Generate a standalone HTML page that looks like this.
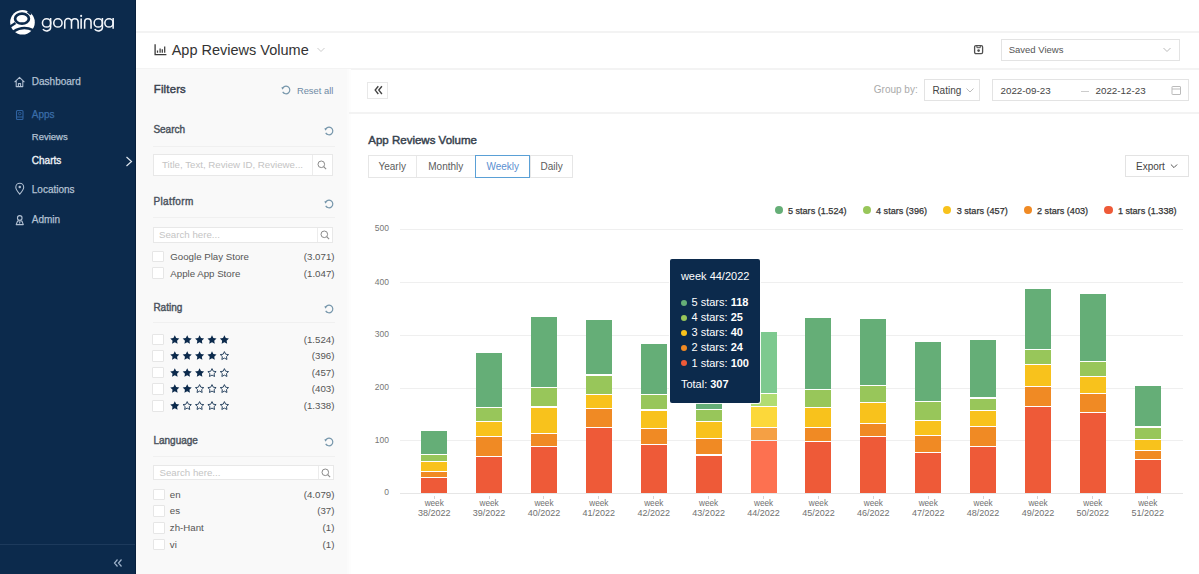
<!DOCTYPE html>
<html><head><meta charset="utf-8"><style>
html,body{margin:0;padding:0;}
body{width:1199px;height:574px;overflow:hidden;position:relative;font-family:"Liberation Sans", sans-serif;background:#fff;}
b{font-weight:bold;}
svg{overflow:visible;}
</style></head><body>
<div style="position:absolute;left:0.00px;top:0.00px;width:136.00px;height:574.00px;background:#0c2a4c;"></div>
<svg style="position:absolute;left:8px;top:8px;" width="30" height="30" viewBox="0 0 30 30">
<circle cx="14.5" cy="14.3" r="12.3" fill="#fff"/>
<ellipse cx="14" cy="10.7" rx="6.9" ry="5.0" fill="none" stroke="#0c2a4c" stroke-width="2.7"/>
<path d="M5.5 23.5 Q15.2 17.2 25 22.2" fill="none" stroke="#0c2a4c" stroke-width="2.6"/>
<path d="M19.5 3.5 L23 6.5" stroke="#0c2a4c" stroke-width="2"/>
<path d="M1.5 19 L7.5 15" stroke="#0c2a4c" stroke-width="2.2"/>
</svg>
<svg style="position:absolute;left:0px;top:0px;" width="130" height="45" viewBox="0 0 130 45"><g fill="none" stroke="#f2f5fa" stroke-width="1.55">
<circle cx="46.6" cy="22.9" r="4.15"/>
<path d="M50.6 18.1 V27.6 C50.6 31.6 44.6 31.8 42.9 29.2"/>
<circle cx="57.9" cy="22.9" r="4.15"/>
<path d="M64.75 28.7 V21.9 A3.37 3.37 0 0 1 71.5 21.9 V28.7 M71.5 21.9 A3.33 3.33 0 0 1 78.15 21.9 V28.7"/>
<path d="M81.15 18.4 V28.7"/>
<path d="M84.65 28.7 V21.9 A3.2 3.2 0 0 1 91.05 21.9 V28.7"/>
<circle cx="98.3" cy="22.9" r="4.15"/>
<path d="M102.4 18.1 V27.6 C102.4 31.6 96.4 31.8 94.7 29.2"/>
<circle cx="109" cy="22.9" r="4.15"/>
<path d="M113.15 18.1 V28.7"/>
</g><circle cx="81.15" cy="15.9" r="1.05" fill="#f2f5fa"/></svg>
<svg style="position:absolute;left:13px;top:75px;" width="14" height="14" viewBox="0 0 14 14"><path d="M1.6 7.2 L6.5 2.4 L11.4 7.2 M3.2 5.8 V11.6 H9.8 V5.8 M5.4 11.6 V8.6 H7.6 V11.6" fill="none" stroke="#b3c1d3" stroke-width="1.05" stroke-linejoin="round"/></svg>
<div style="position:absolute;top:76.53px;font-size:10px;line-height:10px;color:#b3c1d3;font-weight:normal;white-space:nowrap;left:31.80px;-webkit-text-stroke:0.25px #b3c1d3;">Dashboard</div>
<svg style="position:absolute;left:14px;top:109px;" width="12" height="12" viewBox="0 0 12 12"><rect x="2.5" y="1.5" width="6.5" height="9" rx="1" fill="none" stroke="#2f62a0" stroke-width="1.1"/><path d="M2.5 8 H9" stroke="#2f62a0" stroke-width="1"/><circle cx="5.75" cy="4.5" r="1.3" fill="none" stroke="#2f62a0" stroke-width="0.9"/></svg>
<div style="position:absolute;top:109.83px;font-size:10px;line-height:10px;color:#3a6da8;font-weight:normal;white-space:nowrap;left:31.80px;-webkit-text-stroke:0.25px #3a6da8;">Apps</div>
<div style="position:absolute;top:131.96px;font-size:9.5px;line-height:9.5px;color:#b3c1d3;font-weight:normal;white-space:nowrap;left:31.80px;-webkit-text-stroke:0.25px #b3c1d3;">Reviews</div>
<div style="position:absolute;top:156.03px;font-size:10px;line-height:10px;color:#eef2f7;font-weight:normal;white-space:nowrap;left:31.80px;-webkit-text-stroke:0.35px #eef2f7;">Charts</div>
<svg style="position:absolute;left:124px;top:155px;" width="10" height="13" viewBox="0 0 10 13"><path d="M2.5 2 L7.5 6.5 L2.5 11" fill="none" stroke="#dfe6ee" stroke-width="1.2"/></svg>
<svg style="position:absolute;left:14px;top:182px;" width="12" height="13" viewBox="0 0 12 13"><path d="M5.75 12.1 C3.1 9 1.8 7.1 1.8 5.2 A3.95 3.95 0 0 1 9.7 5.2 C9.7 7.1 8.4 9 5.75 12.1 Z" fill="none" stroke="#b3c1d3" stroke-width="1.05"/><circle cx="5.75" cy="5.1" r="1.25" fill="#b3c1d3"/></svg>
<div style="position:absolute;top:184.53px;font-size:10px;line-height:10px;color:#b3c1d3;font-weight:normal;white-space:nowrap;left:31.80px;-webkit-text-stroke:0.25px #b3c1d3;">Locations</div>
<svg style="position:absolute;left:14px;top:213px;" width="12" height="13" viewBox="0 0 12 13"><circle cx="5.75" cy="4.9" r="2.3" fill="none" stroke="#b3c1d3" stroke-width="1.1"/><path d="M2.2 11.6 L3.6 8 H7.9 L9.3 11.6 Z" fill="none" stroke="#b3c1d3" stroke-width="1.1" stroke-linejoin="round"/><path d="M5.75 8.2 L5 9.8 L5.75 11 L6.5 9.8 Z" fill="#b3c1d3"/></svg>
<div style="position:absolute;top:215.03px;font-size:10px;line-height:10px;color:#b3c1d3;font-weight:normal;white-space:nowrap;left:31.80px;-webkit-text-stroke:0.25px #b3c1d3;">Admin</div>
<div style="position:absolute;left:0.00px;top:544.00px;width:136.00px;height:1.00px;background:#1d3a5c;"></div>
<div style="position:absolute;left:134.50px;top:0.00px;width:1.50px;height:574.00px;background:#08203d;"></div>
<svg style="position:absolute;left:112px;top:557px;" width="12" height="12" viewBox="0 0 12 12"><path d="M5.5 2.5 L2.5 6 L5.5 9.5 M9.5 2.5 L6.5 6 L9.5 9.5" fill="none" stroke="#9fb3cb" stroke-width="1.2"/></svg>
<div style="position:absolute;left:136.00px;top:0.00px;width:1063.00px;height:574.00px;background:#fff;"></div>
<div style="position:absolute;left:136.00px;top:30.50px;width:1063.00px;height:2.00px;background:#f3f3f3;"></div>
<svg style="position:absolute;left:152px;top:42px;" width="16" height="16" viewBox="0 0 16 16"><path d="M3.1 2.3 V12.7 H14.4" fill="none" stroke="#3a3a3a" stroke-width="1.3"/><path d="M5.5 8.6 V10.7 M8.1 6.4 V10.7 M10.3 7.3 V10.7 M12.7 4.4 V10.7" stroke="#3a3a3a" stroke-width="1.25"/></svg>
<div style="position:absolute;top:42.73px;font-size:14.5px;line-height:14.5px;color:#333;font-weight:normal;white-space:nowrap;left:171.70px;">App Reviews Volume</div>
<svg style="position:absolute;left:316px;top:46px;" width="10" height="8" viewBox="0 0 10 8"><path d="M1.5 2 L5 5.5 L8.5 2" fill="none" stroke="#ccc" stroke-width="1"/></svg>
<svg style="position:absolute;left:972px;top:44px;" width="12" height="12" viewBox="0 0 12 12"><rect x="2.6" y="1.6" width="8" height="8" rx="1.3" fill="none" stroke="#505050" stroke-width="1.3"/><path d="M4.9 1.6 V3.7 H8.3 V1.6" fill="none" stroke="#505050" stroke-width="1"/><circle cx="6.6" cy="6.6" r="1.3" fill="#505050"/></svg>
<div style="position:absolute;left:1000.50px;top:39.00px;width:179.00px;height:22.00px;background:#fff;border:1px solid #e3e3e3;box-sizing:border-box;"></div>
<div style="position:absolute;top:45.26px;font-size:9.5px;line-height:9.5px;color:#555;font-weight:normal;white-space:nowrap;left:1008.70px;">Saved Views</div>
<svg style="position:absolute;left:1161px;top:45px;" width="12" height="10" viewBox="0 0 12 10"><path d="M2.5 3 L6 6.5 L9.5 3" fill="none" stroke="#bbb" stroke-width="1"/></svg>
<div style="position:absolute;left:136.00px;top:67.50px;width:1063.00px;height:2.00px;background:#f3f3f3;"></div>
<div style="position:absolute;left:136.00px;top:69.00px;width:211.00px;height:505.00px;background:#f9f9f9;"></div>
<div style="position:absolute;left:347.00px;top:69.00px;width:2.00px;height:505.00px;background:#fbfbfb;"></div>
<div style="position:absolute;left:349.00px;top:69.00px;width:2.00px;height:505.00px;background:#fdfdfd;"></div>
<div style="position:absolute;top:83.83px;font-size:11.3px;line-height:11.3px;color:#3a4350;font-weight:normal;white-space:nowrap;letter-spacing:0.2px;left:153.80px;-webkit-text-stroke:0.45px #3a4350;">Filters</div>
<svg style="position:absolute;left:279.6px;top:83.6px;" width="12" height="12" viewBox="0 0 12 12"><path d="M2.43 4.70 A3.8 3.8 0 1 1 2.71 7.90" fill="none" stroke="#7696ab" stroke-width="1.2"/><path d="M1.23 3.40 L3.83 3.10 L2.63 5.70 Z" fill="#7696ab"/></svg>
<div style="position:absolute;top:85.84px;font-size:9.4px;line-height:9.4px;color:#6f8aa5;font-weight:normal;white-space:nowrap;left:296.90px;">Reset all</div>
<div style="position:absolute;top:125.34px;font-size:10px;line-height:10px;color:#4a525c;font-weight:normal;white-space:nowrap;left:153.40px;-webkit-text-stroke:0.4px #4a525c;">Search</div>
<svg style="position:absolute;left:323px;top:125.2px;" width="12" height="12" viewBox="0 0 12 12"><path d="M2.43 4.70 A3.8 3.8 0 1 1 2.71 7.90" fill="none" stroke="#7696ab" stroke-width="1.2"/><path d="M1.23 3.40 L3.83 3.10 L2.63 5.70 Z" fill="#7696ab"/></svg>
<div style="position:absolute;left:152.50px;top:145.50px;width:182.00px;height:1.00px;background:#f0f0f0;"></div>
<div style="position:absolute;left:153.40px;top:154.30px;width:179.60px;height:21.70px;background:#fff;border:1px solid #e8e8e8;box-sizing:border-box;"></div>
<div style="position:absolute;left:311.50px;top:155.30px;width:1.00px;height:19.70px;background:#ececec;"></div>
<div style="position:absolute;top:160.44px;font-size:9.7px;line-height:9.7px;color:#c4c4c4;font-weight:normal;white-space:nowrap;left:162.00px;">Title, Text, Review ID, Reviewe...</div>
<svg style="position:absolute;left:316.25px;top:159.15px;" width="12" height="12" viewBox="0 0 12 12"><circle cx="5.3" cy="5.3" r="3.3" fill="none" stroke="#8a8a8a" stroke-width="1"/><path d="M7.7 7.7 L10.1 10.1" stroke="#8a8a8a" stroke-width="1.1"/></svg>
<div style="position:absolute;top:197.44px;font-size:10px;line-height:10px;color:#4a525c;font-weight:normal;white-space:nowrap;letter-spacing:0.38px;left:153.40px;-webkit-text-stroke:0.4px #4a525c;">Platform</div>
<svg style="position:absolute;left:323px;top:197.9px;" width="12" height="12" viewBox="0 0 12 12"><path d="M2.43 4.70 A3.8 3.8 0 1 1 2.71 7.90" fill="none" stroke="#7696ab" stroke-width="1.2"/><path d="M1.23 3.40 L3.83 3.10 L2.63 5.70 Z" fill="#7696ab"/></svg>
<div style="position:absolute;left:152.50px;top:217.00px;width:182.00px;height:1.00px;background:#f0f0f0;"></div>
<div style="position:absolute;left:152.60px;top:227.00px;width:180.40px;height:16.00px;background:#fff;border:1px solid #e8e8e8;box-sizing:border-box;"></div>
<div style="position:absolute;left:317.00px;top:228.00px;width:1.00px;height:14.00px;background:#ececec;"></div>
<div style="position:absolute;top:230.29px;font-size:9.7px;line-height:9.7px;color:#c4c4c4;font-weight:normal;white-space:nowrap;left:159.00px;">Search here...</div>
<svg style="position:absolute;left:319.0px;top:229.0px;" width="12" height="12" viewBox="0 0 12 12"><circle cx="5.3" cy="5.3" r="3.3" fill="none" stroke="#8a8a8a" stroke-width="1"/><path d="M7.7 7.7 L10.1 10.1" stroke="#8a8a8a" stroke-width="1.1"/></svg>
<div style="position:absolute;left:152.40px;top:250.70px;width:12.00px;height:11.80px;background:#fff;border:1px solid #e6e6e6;box-sizing:border-box;border-radius:1px;"></div>
<div style="position:absolute;top:252.09px;font-size:9.7px;line-height:9.7px;color:#555;font-weight:normal;white-space:nowrap;left:170.30px;">Google Play Store</div>
<div style="position:absolute;top:252.09px;font-size:9.7px;line-height:9.7px;color:#555;font-weight:normal;white-space:nowrap;right:864.50px;">(3.071)</div>
<div style="position:absolute;left:152.40px;top:267.10px;width:12.00px;height:11.80px;background:#fff;border:1px solid #e6e6e6;box-sizing:border-box;border-radius:1px;"></div>
<div style="position:absolute;top:268.59px;font-size:9.7px;line-height:9.7px;color:#555;font-weight:normal;white-space:nowrap;left:170.30px;">Apple App Store</div>
<div style="position:absolute;top:268.59px;font-size:9.7px;line-height:9.7px;color:#555;font-weight:normal;white-space:nowrap;right:864.50px;">(1.047)</div>
<div style="position:absolute;top:303.04px;font-size:10px;line-height:10px;color:#4a525c;font-weight:normal;white-space:nowrap;left:153.40px;-webkit-text-stroke:0.4px #4a525c;">Rating</div>
<svg style="position:absolute;left:323px;top:303px;" width="12" height="12" viewBox="0 0 12 12"><path d="M2.43 4.70 A3.8 3.8 0 1 1 2.71 7.90" fill="none" stroke="#7696ab" stroke-width="1.2"/><path d="M1.23 3.40 L3.83 3.10 L2.63 5.70 Z" fill="#7696ab"/></svg>
<div style="position:absolute;left:152.50px;top:322.00px;width:182.00px;height:1.00px;background:#f0f0f0;"></div>
<div style="position:absolute;left:152.40px;top:333.70px;width:12.00px;height:11.80px;background:#fff;border:1px solid #e6e6e6;box-sizing:border-box;border-radius:1px;"></div>
<svg style="position:absolute;left:169.0px;top:333.6px;" width="64" height="12" viewBox="0 0 64 12"><path d="M5.80,1.15 L7.18,4.00 L10.32,4.43 L8.03,6.63 L8.59,9.74 L5.80,8.25 L3.01,9.74 L3.57,6.63 L1.28,4.43 L4.42,4.00 Z" fill="#0c2a4c"/><path d="M18.20,1.15 L19.58,4.00 L22.72,4.43 L20.43,6.63 L20.99,9.74 L18.20,8.25 L15.41,9.74 L15.97,6.63 L13.68,4.43 L16.82,4.00 Z" fill="#0c2a4c"/><path d="M30.60,1.15 L31.98,4.00 L35.12,4.43 L32.83,6.63 L33.39,9.74 L30.60,8.25 L27.81,9.74 L28.37,6.63 L26.08,4.43 L29.22,4.00 Z" fill="#0c2a4c"/><path d="M43.00,1.15 L44.38,4.00 L47.52,4.43 L45.23,6.63 L45.79,9.74 L43.00,8.25 L40.21,9.74 L40.77,6.63 L38.48,4.43 L41.62,4.00 Z" fill="#0c2a4c"/><path d="M55.40,1.15 L56.78,4.00 L59.92,4.43 L57.63,6.63 L58.19,9.74 L55.40,8.25 L52.61,9.74 L53.17,6.63 L50.88,4.43 L54.02,4.00 Z" fill="#0c2a4c"/></svg>
<div style="position:absolute;top:334.89px;font-size:9.7px;line-height:9.7px;color:#555;font-weight:normal;white-space:nowrap;right:864.60px;">(1.524)</div>
<div style="position:absolute;left:152.40px;top:350.30px;width:12.00px;height:11.80px;background:#fff;border:1px solid #e6e6e6;box-sizing:border-box;border-radius:1px;"></div>
<svg style="position:absolute;left:169.0px;top:350.2px;" width="64" height="12" viewBox="0 0 64 12"><path d="M5.80,1.15 L7.18,4.00 L10.32,4.43 L8.03,6.63 L8.59,9.74 L5.80,8.25 L3.01,9.74 L3.57,6.63 L1.28,4.43 L4.42,4.00 Z" fill="#0c2a4c"/><path d="M18.20,1.15 L19.58,4.00 L22.72,4.43 L20.43,6.63 L20.99,9.74 L18.20,8.25 L15.41,9.74 L15.97,6.63 L13.68,4.43 L16.82,4.00 Z" fill="#0c2a4c"/><path d="M30.60,1.15 L31.98,4.00 L35.12,4.43 L32.83,6.63 L33.39,9.74 L30.60,8.25 L27.81,9.74 L28.37,6.63 L26.08,4.43 L29.22,4.00 Z" fill="#0c2a4c"/><path d="M43.00,1.15 L44.38,4.00 L47.52,4.43 L45.23,6.63 L45.79,9.74 L43.00,8.25 L40.21,9.74 L40.77,6.63 L38.48,4.43 L41.62,4.00 Z" fill="#0c2a4c"/><path d="M55.40,1.60 L56.66,4.21 L59.54,4.61 L57.44,6.61 L57.96,9.47 L55.40,8.10 L52.84,9.47 L53.36,6.61 L51.26,4.61 L54.14,4.21 Z" fill="none" stroke="#0c2a4c" stroke-width="0.85"/></svg>
<div style="position:absolute;top:351.49px;font-size:9.7px;line-height:9.7px;color:#555;font-weight:normal;white-space:nowrap;right:864.60px;">(396)</div>
<div style="position:absolute;left:152.40px;top:366.70px;width:12.00px;height:11.80px;background:#fff;border:1px solid #e6e6e6;box-sizing:border-box;border-radius:1px;"></div>
<svg style="position:absolute;left:169.0px;top:366.6px;" width="64" height="12" viewBox="0 0 64 12"><path d="M5.80,1.15 L7.18,4.00 L10.32,4.43 L8.03,6.63 L8.59,9.74 L5.80,8.25 L3.01,9.74 L3.57,6.63 L1.28,4.43 L4.42,4.00 Z" fill="#0c2a4c"/><path d="M18.20,1.15 L19.58,4.00 L22.72,4.43 L20.43,6.63 L20.99,9.74 L18.20,8.25 L15.41,9.74 L15.97,6.63 L13.68,4.43 L16.82,4.00 Z" fill="#0c2a4c"/><path d="M30.60,1.15 L31.98,4.00 L35.12,4.43 L32.83,6.63 L33.39,9.74 L30.60,8.25 L27.81,9.74 L28.37,6.63 L26.08,4.43 L29.22,4.00 Z" fill="#0c2a4c"/><path d="M43.00,1.60 L44.26,4.21 L47.14,4.61 L45.04,6.61 L45.56,9.47 L43.00,8.10 L40.44,9.47 L40.96,6.61 L38.86,4.61 L41.74,4.21 Z" fill="none" stroke="#0c2a4c" stroke-width="0.85"/><path d="M55.40,1.60 L56.66,4.21 L59.54,4.61 L57.44,6.61 L57.96,9.47 L55.40,8.10 L52.84,9.47 L53.36,6.61 L51.26,4.61 L54.14,4.21 Z" fill="none" stroke="#0c2a4c" stroke-width="0.85"/></svg>
<div style="position:absolute;top:367.89px;font-size:9.7px;line-height:9.7px;color:#555;font-weight:normal;white-space:nowrap;right:864.60px;">(457)</div>
<div style="position:absolute;left:152.40px;top:383.30px;width:12.00px;height:11.80px;background:#fff;border:1px solid #e6e6e6;box-sizing:border-box;border-radius:1px;"></div>
<svg style="position:absolute;left:169.0px;top:383.2px;" width="64" height="12" viewBox="0 0 64 12"><path d="M5.80,1.15 L7.18,4.00 L10.32,4.43 L8.03,6.63 L8.59,9.74 L5.80,8.25 L3.01,9.74 L3.57,6.63 L1.28,4.43 L4.42,4.00 Z" fill="#0c2a4c"/><path d="M18.20,1.15 L19.58,4.00 L22.72,4.43 L20.43,6.63 L20.99,9.74 L18.20,8.25 L15.41,9.74 L15.97,6.63 L13.68,4.43 L16.82,4.00 Z" fill="#0c2a4c"/><path d="M30.60,1.60 L31.86,4.21 L34.74,4.61 L32.64,6.61 L33.16,9.47 L30.60,8.10 L28.04,9.47 L28.56,6.61 L26.46,4.61 L29.34,4.21 Z" fill="none" stroke="#0c2a4c" stroke-width="0.85"/><path d="M43.00,1.60 L44.26,4.21 L47.14,4.61 L45.04,6.61 L45.56,9.47 L43.00,8.10 L40.44,9.47 L40.96,6.61 L38.86,4.61 L41.74,4.21 Z" fill="none" stroke="#0c2a4c" stroke-width="0.85"/><path d="M55.40,1.60 L56.66,4.21 L59.54,4.61 L57.44,6.61 L57.96,9.47 L55.40,8.10 L52.84,9.47 L53.36,6.61 L51.26,4.61 L54.14,4.21 Z" fill="none" stroke="#0c2a4c" stroke-width="0.85"/></svg>
<div style="position:absolute;top:384.49px;font-size:9.7px;line-height:9.7px;color:#555;font-weight:normal;white-space:nowrap;right:864.60px;">(403)</div>
<div style="position:absolute;left:152.40px;top:399.90px;width:12.00px;height:11.80px;background:#fff;border:1px solid #e6e6e6;box-sizing:border-box;border-radius:1px;"></div>
<svg style="position:absolute;left:169.0px;top:399.8px;" width="64" height="12" viewBox="0 0 64 12"><path d="M5.80,1.15 L7.18,4.00 L10.32,4.43 L8.03,6.63 L8.59,9.74 L5.80,8.25 L3.01,9.74 L3.57,6.63 L1.28,4.43 L4.42,4.00 Z" fill="#0c2a4c"/><path d="M18.20,1.60 L19.46,4.21 L22.34,4.61 L20.24,6.61 L20.76,9.47 L18.20,8.10 L15.64,9.47 L16.16,6.61 L14.06,4.61 L16.94,4.21 Z" fill="none" stroke="#0c2a4c" stroke-width="0.85"/><path d="M30.60,1.60 L31.86,4.21 L34.74,4.61 L32.64,6.61 L33.16,9.47 L30.60,8.10 L28.04,9.47 L28.56,6.61 L26.46,4.61 L29.34,4.21 Z" fill="none" stroke="#0c2a4c" stroke-width="0.85"/><path d="M43.00,1.60 L44.26,4.21 L47.14,4.61 L45.04,6.61 L45.56,9.47 L43.00,8.10 L40.44,9.47 L40.96,6.61 L38.86,4.61 L41.74,4.21 Z" fill="none" stroke="#0c2a4c" stroke-width="0.85"/><path d="M55.40,1.60 L56.66,4.21 L59.54,4.61 L57.44,6.61 L57.96,9.47 L55.40,8.10 L52.84,9.47 L53.36,6.61 L51.26,4.61 L54.14,4.21 Z" fill="none" stroke="#0c2a4c" stroke-width="0.85"/></svg>
<div style="position:absolute;top:401.09px;font-size:9.7px;line-height:9.7px;color:#555;font-weight:normal;white-space:nowrap;right:864.60px;">(1.338)</div>
<div style="position:absolute;top:435.94px;font-size:10px;line-height:10px;color:#4a525c;font-weight:normal;white-space:nowrap;left:153.40px;-webkit-text-stroke:0.4px #4a525c;">Language</div>
<svg style="position:absolute;left:323px;top:435.6px;" width="12" height="12" viewBox="0 0 12 12"><path d="M2.43 4.70 A3.8 3.8 0 1 1 2.71 7.90" fill="none" stroke="#7696ab" stroke-width="1.2"/><path d="M1.23 3.40 L3.83 3.10 L2.63 5.70 Z" fill="#7696ab"/></svg>
<div style="position:absolute;left:152.50px;top:456.00px;width:182.00px;height:1.00px;background:#f0f0f0;"></div>
<div style="position:absolute;left:153.40px;top:464.60px;width:180.60px;height:15.90px;background:#fff;border:1px solid #e8e8e8;box-sizing:border-box;"></div>
<div style="position:absolute;left:317.60px;top:465.60px;width:1.00px;height:13.90px;background:#ececec;"></div>
<div style="position:absolute;top:467.84px;font-size:9.7px;line-height:9.7px;color:#c4c4c4;font-weight:normal;white-space:nowrap;left:159.50px;">Search here...</div>
<svg style="position:absolute;left:319.8px;top:466.55px;" width="12" height="12" viewBox="0 0 12 12"><circle cx="5.3" cy="5.3" r="3.3" fill="none" stroke="#8a8a8a" stroke-width="1"/><path d="M7.7 7.7 L10.1 10.1" stroke="#8a8a8a" stroke-width="1.1"/></svg>
<div style="position:absolute;left:152.60px;top:488.50px;width:12.00px;height:11.80px;background:#fff;border:1px solid #e6e6e6;box-sizing:border-box;border-radius:1px;"></div>
<div style="position:absolute;top:489.69px;font-size:9.7px;line-height:9.7px;color:#555;font-weight:normal;white-space:nowrap;left:169.80px;">en</div>
<div style="position:absolute;top:489.69px;font-size:9.7px;line-height:9.7px;color:#555;font-weight:normal;white-space:nowrap;right:864.60px;">(4.079)</div>
<div style="position:absolute;left:152.60px;top:505.30px;width:12.00px;height:11.80px;background:#fff;border:1px solid #e6e6e6;box-sizing:border-box;border-radius:1px;"></div>
<div style="position:absolute;top:506.49px;font-size:9.7px;line-height:9.7px;color:#555;font-weight:normal;white-space:nowrap;left:169.80px;">es</div>
<div style="position:absolute;top:506.49px;font-size:9.7px;line-height:9.7px;color:#555;font-weight:normal;white-space:nowrap;right:864.60px;">(37)</div>
<div style="position:absolute;left:152.60px;top:521.90px;width:12.00px;height:11.80px;background:#fff;border:1px solid #e6e6e6;box-sizing:border-box;border-radius:1px;"></div>
<div style="position:absolute;top:523.09px;font-size:9.7px;line-height:9.7px;color:#555;font-weight:normal;white-space:nowrap;left:169.80px;">zh-Hant</div>
<div style="position:absolute;top:523.09px;font-size:9.7px;line-height:9.7px;color:#555;font-weight:normal;white-space:nowrap;right:864.60px;">(1)</div>
<div style="position:absolute;left:152.60px;top:538.50px;width:12.00px;height:11.80px;background:#fff;border:1px solid #e6e6e6;box-sizing:border-box;border-radius:1px;"></div>
<div style="position:absolute;top:539.69px;font-size:9.7px;line-height:9.7px;color:#555;font-weight:normal;white-space:nowrap;left:169.80px;">vi</div>
<div style="position:absolute;top:539.69px;font-size:9.7px;line-height:9.7px;color:#555;font-weight:normal;white-space:nowrap;right:864.60px;">(1)</div>
<div style="position:absolute;left:367.40px;top:82.20px;width:21.10px;height:16.40px;background:#fff;border:1px solid #e8e8e8;box-sizing:border-box;"></div>
<svg style="position:absolute;left:371px;top:85px;" width="14" height="11" viewBox="0 0 14 11"><path d="M7.3 1.2 L4.2 5.1 L7.3 9.0 M10.9 1.2 L7.8 5.1 L10.9 9.0" fill="none" stroke="#444" stroke-width="1.4"/></svg>
<div style="position:absolute;top:85.44px;font-size:10px;line-height:10px;color:#aaa;font-weight:normal;white-space:nowrap;left:873.80px;">Group by:</div>
<div style="position:absolute;left:923.60px;top:79.30px;width:56.90px;height:22.20px;background:#fff;border:1px solid #e3e3e3;box-sizing:border-box;"></div>
<div style="position:absolute;top:85.83px;font-size:10px;line-height:10px;color:#444;font-weight:normal;white-space:nowrap;left:932.40px;">Rating</div>
<svg style="position:absolute;left:964px;top:85px;" width="12" height="10" viewBox="0 0 12 10"><path d="M2.5 3.5 L6 7 L9.5 3.5" fill="none" stroke="#bbb" stroke-width="1"/></svg>
<div style="position:absolute;left:992.40px;top:79.30px;width:196.60px;height:22.20px;background:#fff;border:1px solid #e3e3e3;box-sizing:border-box;"></div>
<div style="position:absolute;top:86.20px;font-size:9.8px;line-height:9.8px;color:#444;font-weight:normal;white-space:nowrap;left:1000.50px;">2022-09-23</div>
<div style="position:absolute;left:1080.50px;top:91.00px;width:8.50px;height:1.00px;background:#ccc;"></div>
<div style="position:absolute;top:86.20px;font-size:9.8px;line-height:9.8px;color:#444;font-weight:normal;white-space:nowrap;left:1095.50px;">2022-12-23</div>
<svg style="position:absolute;left:1170px;top:84px;" width="12" height="13" viewBox="0 0 12 13"><rect x="2" y="2.5" width="8.5" height="8" rx="0.5" fill="none" stroke="#bbb" stroke-width="1"/><path d="M2 5 H10.5" stroke="#bbb" stroke-width="1"/></svg>
<div style="position:absolute;left:349.00px;top:112.30px;width:850.00px;height:1.70px;background:#f3f3f3;"></div>
<div style="position:absolute;top:134.77px;font-size:11.5px;line-height:11.5px;color:#36414d;font-weight:normal;white-space:nowrap;left:368.30px;-webkit-text-stroke:0.45px #36414d;">App Reviews Volume</div>
<div style="position:absolute;left:367.90px;top:155.00px;width:205.30px;height:22.60px;background:#fff;border:1px solid #e6e6e6;box-sizing:border-box;"></div>
<div style="position:absolute;left:415.80px;top:156.00px;width:1.00px;height:20.60px;background:#e8e8e8;"></div>
<div style="position:absolute;left:530.00px;top:156.00px;width:1.00px;height:20.60px;background:#e8e8e8;"></div>
<div style="position:absolute;left:475.30px;top:155.00px;width:55.00px;height:22.60px;background:transparent;border:1px solid #5aa0d6;box-sizing:border-box;"></div>
<div style="position:absolute;top:161.53px;font-size:10px;line-height:10px;color:#5c5c5c;font-weight:normal;white-space:nowrap;left:192.20px;width:400px;text-align:center;">Yearly</div>
<div style="position:absolute;top:161.53px;font-size:10px;line-height:10px;color:#5c5c5c;font-weight:normal;white-space:nowrap;left:245.80px;width:400px;text-align:center;">Monthly</div>
<div style="position:absolute;top:161.53px;font-size:10px;line-height:10px;color:#5b8fd0;font-weight:normal;white-space:nowrap;left:302.80px;width:400px;text-align:center;">Weekly</div>
<div style="position:absolute;top:161.53px;font-size:10px;line-height:10px;color:#5c5c5c;font-weight:normal;white-space:nowrap;left:351.60px;width:400px;text-align:center;">Daily</div>
<div style="position:absolute;left:1125.30px;top:154.90px;width:63.70px;height:22.50px;background:#fff;border:1px solid #e3e3e3;box-sizing:border-box;"></div>
<div style="position:absolute;top:161.53px;font-size:10px;line-height:10px;color:#444;font-weight:normal;white-space:nowrap;left:1136.00px;">Export</div>
<svg style="position:absolute;left:1169px;top:161px;" width="10" height="10" viewBox="0 0 10 10"><path d="M1.9 3.5 L5 6.6 L8.1 3.5" fill="none" stroke="#555" stroke-width="1"/></svg>
<div style="position:absolute;left:774.50px;top:206.00px;width:8.4px;height:8.4px;border-radius:50%;background:#65ae77;"></div>
<div style="position:absolute;top:206.60px;font-size:9.1px;line-height:9.1px;color:#333;font-weight:normal;white-space:nowrap;left:787.90px;-webkit-text-stroke:0.25px #333;">5 stars (1.524)</div>
<div style="position:absolute;left:862.60px;top:206.00px;width:8.4px;height:8.4px;border-radius:50%;background:#98c65a;"></div>
<div style="position:absolute;top:206.60px;font-size:9.1px;line-height:9.1px;color:#333;font-weight:normal;white-space:nowrap;left:876.00px;-webkit-text-stroke:0.25px #333;">4 stars (396)</div>
<div style="position:absolute;left:943.00px;top:206.00px;width:8.4px;height:8.4px;border-radius:50%;background:#f8c21c;"></div>
<div style="position:absolute;top:206.60px;font-size:9.1px;line-height:9.1px;color:#333;font-weight:normal;white-space:nowrap;left:956.70px;-webkit-text-stroke:0.25px #333;">3 stars (457)</div>
<div style="position:absolute;left:1023.70px;top:206.00px;width:8.4px;height:8.4px;border-radius:50%;background:#f08a24;"></div>
<div style="position:absolute;top:206.60px;font-size:9.1px;line-height:9.1px;color:#333;font-weight:normal;white-space:nowrap;left:1037.00px;-webkit-text-stroke:0.25px #333;">2 stars (403)</div>
<div style="position:absolute;left:1104.20px;top:206.00px;width:8.4px;height:8.4px;border-radius:50%;background:#ee5a38;"></div>
<div style="position:absolute;top:206.60px;font-size:9.1px;line-height:9.1px;color:#333;font-weight:normal;white-space:nowrap;left:1117.90px;-webkit-text-stroke:0.25px #333;">1 stars (1.338)</div>
<div style="position:absolute;left:400.00px;top:228.70px;width:783.00px;height:1.00px;background:#efefef;"></div>
<div style="position:absolute;top:224.40px;font-size:8.5px;line-height:8.5px;color:#777;font-weight:normal;white-space:nowrap;right:810.00px;">500</div>
<div style="position:absolute;left:400.00px;top:281.80px;width:783.00px;height:1.00px;background:#efefef;"></div>
<div style="position:absolute;top:277.50px;font-size:8.5px;line-height:8.5px;color:#777;font-weight:normal;white-space:nowrap;right:810.00px;">400</div>
<div style="position:absolute;left:400.00px;top:334.70px;width:783.00px;height:1.00px;background:#efefef;"></div>
<div style="position:absolute;top:330.40px;font-size:8.5px;line-height:8.5px;color:#777;font-weight:normal;white-space:nowrap;right:810.00px;">300</div>
<div style="position:absolute;left:400.00px;top:387.60px;width:783.00px;height:1.00px;background:#efefef;"></div>
<div style="position:absolute;top:383.30px;font-size:8.5px;line-height:8.5px;color:#777;font-weight:normal;white-space:nowrap;right:810.00px;">200</div>
<div style="position:absolute;left:400.00px;top:440.10px;width:783.00px;height:1.00px;background:#efefef;"></div>
<div style="position:absolute;top:435.80px;font-size:8.5px;line-height:8.5px;color:#777;font-weight:normal;white-space:nowrap;right:810.00px;">100</div>
<div style="position:absolute;left:400.00px;top:492.50px;width:783.00px;height:1.00px;background:#e6e6e6;"></div>
<div style="position:absolute;top:488.40px;font-size:8.5px;line-height:8.5px;color:#777;font-weight:normal;white-space:nowrap;right:810.00px;">0</div>
<div style="position:absolute;left:421.20px;top:478.00px;width:26.00px;height:15.00px;background:#ee5a38;"></div>
<div style="position:absolute;left:421.20px;top:471.50px;width:26.00px;height:5.50px;background:#f08a24;"></div>
<div style="position:absolute;left:421.20px;top:462.00px;width:26.00px;height:8.50px;background:#f8c21c;"></div>
<div style="position:absolute;left:421.20px;top:454.80px;width:26.00px;height:6.20px;background:#98c65a;"></div>
<div style="position:absolute;left:421.20px;top:430.90px;width:26.00px;height:22.90px;background:#65ae77;"></div>
<div style="position:absolute;left:433.70px;top:495.50px;width:1.00px;height:3.50px;background:#d4d4d4;"></div>
<div style="position:absolute;top:499.66px;font-size:8.2px;line-height:8.2px;color:#707070;font-weight:normal;white-space:nowrap;left:234.20px;width:400px;text-align:center;">week</div>
<div style="position:absolute;top:509.38px;font-size:9px;line-height:9px;color:#707070;font-weight:normal;white-space:nowrap;left:234.20px;width:400px;text-align:center;">38/2022</div>
<div style="position:absolute;left:476.09px;top:456.60px;width:26.00px;height:36.40px;background:#ee5a38;"></div>
<div style="position:absolute;left:476.09px;top:437.20px;width:26.00px;height:18.40px;background:#f08a24;"></div>
<div style="position:absolute;left:476.09px;top:421.70px;width:26.00px;height:14.50px;background:#f8c21c;"></div>
<div style="position:absolute;left:476.09px;top:408.00px;width:26.00px;height:12.70px;background:#98c65a;"></div>
<div style="position:absolute;left:476.09px;top:353.20px;width:26.00px;height:53.80px;background:#65ae77;"></div>
<div style="position:absolute;left:488.59px;top:495.50px;width:1.00px;height:3.50px;background:#d4d4d4;"></div>
<div style="position:absolute;top:499.66px;font-size:8.2px;line-height:8.2px;color:#707070;font-weight:normal;white-space:nowrap;left:289.09px;width:400px;text-align:center;">week</div>
<div style="position:absolute;top:509.38px;font-size:9px;line-height:9px;color:#707070;font-weight:normal;white-space:nowrap;left:289.09px;width:400px;text-align:center;">39/2022</div>
<div style="position:absolute;left:530.98px;top:447.40px;width:26.00px;height:45.60px;background:#ee5a38;"></div>
<div style="position:absolute;left:530.98px;top:433.90px;width:26.00px;height:12.50px;background:#f08a24;"></div>
<div style="position:absolute;left:530.98px;top:407.50px;width:26.00px;height:25.40px;background:#f8c21c;"></div>
<div style="position:absolute;left:530.98px;top:387.60px;width:26.00px;height:18.90px;background:#98c65a;"></div>
<div style="position:absolute;left:530.98px;top:317.20px;width:26.00px;height:69.40px;background:#65ae77;"></div>
<div style="position:absolute;left:543.48px;top:495.50px;width:1.00px;height:3.50px;background:#d4d4d4;"></div>
<div style="position:absolute;top:499.66px;font-size:8.2px;line-height:8.2px;color:#707070;font-weight:normal;white-space:nowrap;left:343.98px;width:400px;text-align:center;">week</div>
<div style="position:absolute;top:509.38px;font-size:9px;line-height:9px;color:#707070;font-weight:normal;white-space:nowrap;left:343.98px;width:400px;text-align:center;">40/2022</div>
<div style="position:absolute;left:585.87px;top:427.80px;width:26.00px;height:65.20px;background:#ee5a38;"></div>
<div style="position:absolute;left:585.87px;top:409.10px;width:26.00px;height:17.70px;background:#f08a24;"></div>
<div style="position:absolute;left:585.87px;top:395.40px;width:26.00px;height:12.70px;background:#f8c21c;"></div>
<div style="position:absolute;left:585.87px;top:375.50px;width:26.00px;height:18.90px;background:#98c65a;"></div>
<div style="position:absolute;left:585.87px;top:320.10px;width:26.00px;height:54.40px;background:#65ae77;"></div>
<div style="position:absolute;left:598.37px;top:495.50px;width:1.00px;height:3.50px;background:#d4d4d4;"></div>
<div style="position:absolute;top:499.66px;font-size:8.2px;line-height:8.2px;color:#707070;font-weight:normal;white-space:nowrap;left:398.87px;width:400px;text-align:center;">week</div>
<div style="position:absolute;top:509.38px;font-size:9px;line-height:9px;color:#707070;font-weight:normal;white-space:nowrap;left:398.87px;width:400px;text-align:center;">41/2022</div>
<div style="position:absolute;left:640.76px;top:445.10px;width:26.00px;height:47.90px;background:#ee5a38;"></div>
<div style="position:absolute;left:640.76px;top:428.90px;width:26.00px;height:15.20px;background:#f08a24;"></div>
<div style="position:absolute;left:640.76px;top:410.50px;width:26.00px;height:17.40px;background:#f8c21c;"></div>
<div style="position:absolute;left:640.76px;top:395.20px;width:26.00px;height:14.30px;background:#98c65a;"></div>
<div style="position:absolute;left:640.76px;top:344.20px;width:26.00px;height:50.00px;background:#65ae77;"></div>
<div style="position:absolute;left:653.26px;top:495.50px;width:1.00px;height:3.50px;background:#d4d4d4;"></div>
<div style="position:absolute;top:499.66px;font-size:8.2px;line-height:8.2px;color:#707070;font-weight:normal;white-space:nowrap;left:453.76px;width:400px;text-align:center;">week</div>
<div style="position:absolute;top:509.38px;font-size:9px;line-height:9px;color:#707070;font-weight:normal;white-space:nowrap;left:453.76px;width:400px;text-align:center;">42/2022</div>
<div style="position:absolute;left:695.65px;top:455.50px;width:26.00px;height:37.50px;background:#ee5a38;"></div>
<div style="position:absolute;left:695.65px;top:438.60px;width:26.00px;height:15.90px;background:#f08a24;"></div>
<div style="position:absolute;left:695.65px;top:422.20px;width:26.00px;height:15.40px;background:#f8c21c;"></div>
<div style="position:absolute;left:695.65px;top:409.80px;width:26.00px;height:11.40px;background:#98c65a;"></div>
<div style="position:absolute;left:695.65px;top:340.00px;width:26.00px;height:68.80px;background:#65ae77;"></div>
<div style="position:absolute;left:708.15px;top:495.50px;width:1.00px;height:3.50px;background:#d4d4d4;"></div>
<div style="position:absolute;top:499.66px;font-size:8.2px;line-height:8.2px;color:#707070;font-weight:normal;white-space:nowrap;left:508.65px;width:400px;text-align:center;">week</div>
<div style="position:absolute;top:509.38px;font-size:9px;line-height:9px;color:#707070;font-weight:normal;white-space:nowrap;left:508.65px;width:400px;text-align:center;">43/2022</div>
<div style="position:absolute;left:750.54px;top:440.70px;width:26.00px;height:52.30px;background:#fd7150;"></div>
<div style="position:absolute;left:750.54px;top:428.30px;width:26.00px;height:11.40px;background:#f5a044;"></div>
<div style="position:absolute;left:750.54px;top:407.10px;width:26.00px;height:20.20px;background:#fcd83a;"></div>
<div style="position:absolute;left:750.54px;top:393.50px;width:26.00px;height:12.60px;background:#b0dc72;"></div>
<div style="position:absolute;left:750.54px;top:331.50px;width:26.00px;height:61.00px;background:#7dc98f;"></div>
<div style="position:absolute;left:763.04px;top:495.50px;width:1.00px;height:3.50px;background:#d4d4d4;"></div>
<div style="position:absolute;top:499.66px;font-size:8.2px;line-height:8.2px;color:#707070;font-weight:normal;white-space:nowrap;left:563.54px;width:400px;text-align:center;">week</div>
<div style="position:absolute;top:509.38px;font-size:9px;line-height:9px;color:#707070;font-weight:normal;white-space:nowrap;left:563.54px;width:400px;text-align:center;">44/2022</div>
<div style="position:absolute;left:805.43px;top:441.70px;width:26.00px;height:51.30px;background:#ee5a38;"></div>
<div style="position:absolute;left:805.43px;top:428.20px;width:26.00px;height:12.50px;background:#f08a24;"></div>
<div style="position:absolute;left:805.43px;top:407.50px;width:26.00px;height:19.70px;background:#f8c21c;"></div>
<div style="position:absolute;left:805.43px;top:390.00px;width:26.00px;height:16.50px;background:#98c65a;"></div>
<div style="position:absolute;left:805.43px;top:317.60px;width:26.00px;height:71.40px;background:#65ae77;"></div>
<div style="position:absolute;left:817.93px;top:495.50px;width:1.00px;height:3.50px;background:#d4d4d4;"></div>
<div style="position:absolute;top:499.66px;font-size:8.2px;line-height:8.2px;color:#707070;font-weight:normal;white-space:nowrap;left:618.43px;width:400px;text-align:center;">week</div>
<div style="position:absolute;top:509.38px;font-size:9px;line-height:9px;color:#707070;font-weight:normal;white-space:nowrap;left:618.43px;width:400px;text-align:center;">45/2022</div>
<div style="position:absolute;left:860.32px;top:436.80px;width:26.00px;height:56.20px;background:#ee5a38;"></div>
<div style="position:absolute;left:860.32px;top:424.40px;width:26.00px;height:11.40px;background:#f08a24;"></div>
<div style="position:absolute;left:860.32px;top:403.00px;width:26.00px;height:20.40px;background:#f8c21c;"></div>
<div style="position:absolute;left:860.32px;top:386.20px;width:26.00px;height:15.80px;background:#98c65a;"></div>
<div style="position:absolute;left:860.32px;top:319.40px;width:26.00px;height:65.80px;background:#65ae77;"></div>
<div style="position:absolute;left:872.82px;top:495.50px;width:1.00px;height:3.50px;background:#d4d4d4;"></div>
<div style="position:absolute;top:499.66px;font-size:8.2px;line-height:8.2px;color:#707070;font-weight:normal;white-space:nowrap;left:673.32px;width:400px;text-align:center;">week</div>
<div style="position:absolute;top:509.38px;font-size:9px;line-height:9px;color:#707070;font-weight:normal;white-space:nowrap;left:673.32px;width:400px;text-align:center;">46/2022</div>
<div style="position:absolute;left:915.21px;top:453.00px;width:26.00px;height:40.00px;background:#ee5a38;"></div>
<div style="position:absolute;left:915.21px;top:436.30px;width:26.00px;height:15.70px;background:#f08a24;"></div>
<div style="position:absolute;left:915.21px;top:421.00px;width:26.00px;height:14.30px;background:#f8c21c;"></div>
<div style="position:absolute;left:915.21px;top:402.30px;width:26.00px;height:17.70px;background:#98c65a;"></div>
<div style="position:absolute;left:915.21px;top:342.40px;width:26.00px;height:58.90px;background:#65ae77;"></div>
<div style="position:absolute;left:927.71px;top:495.50px;width:1.00px;height:3.50px;background:#d4d4d4;"></div>
<div style="position:absolute;top:499.66px;font-size:8.2px;line-height:8.2px;color:#707070;font-weight:normal;white-space:nowrap;left:728.21px;width:400px;text-align:center;">week</div>
<div style="position:absolute;top:509.38px;font-size:9px;line-height:9px;color:#707070;font-weight:normal;white-space:nowrap;left:728.21px;width:400px;text-align:center;">47/2022</div>
<div style="position:absolute;left:970.10px;top:447.00px;width:26.00px;height:46.00px;background:#ee5a38;"></div>
<div style="position:absolute;left:970.10px;top:426.90px;width:26.00px;height:19.10px;background:#f08a24;"></div>
<div style="position:absolute;left:970.10px;top:411.20px;width:26.00px;height:14.70px;background:#f8c21c;"></div>
<div style="position:absolute;left:970.10px;top:398.50px;width:26.00px;height:11.70px;background:#98c65a;"></div>
<div style="position:absolute;left:970.10px;top:340.20px;width:26.00px;height:57.30px;background:#65ae77;"></div>
<div style="position:absolute;left:982.60px;top:495.50px;width:1.00px;height:3.50px;background:#d4d4d4;"></div>
<div style="position:absolute;top:499.66px;font-size:8.2px;line-height:8.2px;color:#707070;font-weight:normal;white-space:nowrap;left:783.10px;width:400px;text-align:center;">week</div>
<div style="position:absolute;top:509.38px;font-size:9px;line-height:9px;color:#707070;font-weight:normal;white-space:nowrap;left:783.10px;width:400px;text-align:center;">48/2022</div>
<div style="position:absolute;left:1024.99px;top:406.60px;width:26.00px;height:86.40px;background:#ee5a38;"></div>
<div style="position:absolute;left:1024.99px;top:386.70px;width:26.00px;height:18.90px;background:#f08a24;"></div>
<div style="position:absolute;left:1024.99px;top:364.80px;width:26.00px;height:20.90px;background:#f8c21c;"></div>
<div style="position:absolute;left:1024.99px;top:350.10px;width:26.00px;height:13.70px;background:#98c65a;"></div>
<div style="position:absolute;left:1024.99px;top:288.80px;width:26.00px;height:60.30px;background:#65ae77;"></div>
<div style="position:absolute;left:1037.49px;top:495.50px;width:1.00px;height:3.50px;background:#d4d4d4;"></div>
<div style="position:absolute;top:499.66px;font-size:8.2px;line-height:8.2px;color:#707070;font-weight:normal;white-space:nowrap;left:837.99px;width:400px;text-align:center;">week</div>
<div style="position:absolute;top:509.38px;font-size:9px;line-height:9px;color:#707070;font-weight:normal;white-space:nowrap;left:837.99px;width:400px;text-align:center;">49/2022</div>
<div style="position:absolute;left:1079.88px;top:412.90px;width:26.00px;height:80.10px;background:#ee5a38;"></div>
<div style="position:absolute;left:1079.88px;top:394.10px;width:26.00px;height:17.80px;background:#f08a24;"></div>
<div style="position:absolute;left:1079.88px;top:377.30px;width:26.00px;height:15.80px;background:#f8c21c;"></div>
<div style="position:absolute;left:1079.88px;top:361.60px;width:26.00px;height:14.70px;background:#98c65a;"></div>
<div style="position:absolute;left:1079.88px;top:293.60px;width:26.00px;height:67.00px;background:#65ae77;"></div>
<div style="position:absolute;left:1092.38px;top:495.50px;width:1.00px;height:3.50px;background:#d4d4d4;"></div>
<div style="position:absolute;top:499.66px;font-size:8.2px;line-height:8.2px;color:#707070;font-weight:normal;white-space:nowrap;left:892.88px;width:400px;text-align:center;">week</div>
<div style="position:absolute;top:509.38px;font-size:9px;line-height:9px;color:#707070;font-weight:normal;white-space:nowrap;left:892.88px;width:400px;text-align:center;">50/2022</div>
<div style="position:absolute;left:1134.77px;top:459.90px;width:26.00px;height:33.10px;background:#ee5a38;"></div>
<div style="position:absolute;left:1134.77px;top:450.50px;width:26.00px;height:8.40px;background:#f08a24;"></div>
<div style="position:absolute;left:1134.77px;top:439.50px;width:26.00px;height:10.00px;background:#f8c21c;"></div>
<div style="position:absolute;left:1134.77px;top:427.50px;width:26.00px;height:11.00px;background:#98c65a;"></div>
<div style="position:absolute;left:1134.77px;top:385.90px;width:26.00px;height:40.60px;background:#65ae77;"></div>
<div style="position:absolute;left:1147.27px;top:495.50px;width:1.00px;height:3.50px;background:#d4d4d4;"></div>
<div style="position:absolute;top:499.66px;font-size:8.2px;line-height:8.2px;color:#707070;font-weight:normal;white-space:nowrap;left:947.77px;width:400px;text-align:center;">week</div>
<div style="position:absolute;top:509.38px;font-size:9px;line-height:9px;color:#707070;font-weight:normal;white-space:nowrap;left:947.77px;width:400px;text-align:center;">51/2022</div>
<div style="position:absolute;left:669.8px;top:258.7px;width:90.4px;height:144.8px;background:#0c2a4c;border-radius:2px;box-shadow:0 0 0 1px rgba(255,255,255,0.9);"></div>
<div style="position:absolute;top:271.19px;font-size:11px;line-height:11px;color:#fff;font-weight:normal;white-space:nowrap;left:680.90px;">week 44/2022</div>
<div style="position:absolute;left:680.70px;top:299.50px;width:6px;height:6px;border-radius:50%;background:#65ae77;"></div>
<div style="position:absolute;top:296.99px;font-size:11px;line-height:11px;color:#fff;font-weight:normal;white-space:nowrap;left:691.50px;">5 stars: <b>118</b></div>
<div style="position:absolute;left:680.70px;top:314.80px;width:6px;height:6px;border-radius:50%;background:#98c65a;"></div>
<div style="position:absolute;top:312.29px;font-size:11px;line-height:11px;color:#fff;font-weight:normal;white-space:nowrap;left:691.50px;">4 stars: <b>25</b></div>
<div style="position:absolute;left:680.70px;top:329.90px;width:6px;height:6px;border-radius:50%;background:#f8c21c;"></div>
<div style="position:absolute;top:327.39px;font-size:11px;line-height:11px;color:#fff;font-weight:normal;white-space:nowrap;left:691.50px;">3 stars: <b>40</b></div>
<div style="position:absolute;left:680.70px;top:345.00px;width:6px;height:6px;border-radius:50%;background:#f08a24;"></div>
<div style="position:absolute;top:342.49px;font-size:11px;line-height:11px;color:#fff;font-weight:normal;white-space:nowrap;left:691.50px;">2 stars: <b>24</b></div>
<div style="position:absolute;left:680.70px;top:360.30px;width:6px;height:6px;border-radius:50%;background:#ee5a38;"></div>
<div style="position:absolute;top:357.79px;font-size:11px;line-height:11px;color:#fff;font-weight:normal;white-space:nowrap;left:691.50px;">1 stars: <b>100</b></div>
<div style="position:absolute;top:379.29px;font-size:11px;line-height:11px;color:#fff;font-weight:normal;white-space:nowrap;left:680.90px;">Total: <b>307</b></div>
</body></html>
